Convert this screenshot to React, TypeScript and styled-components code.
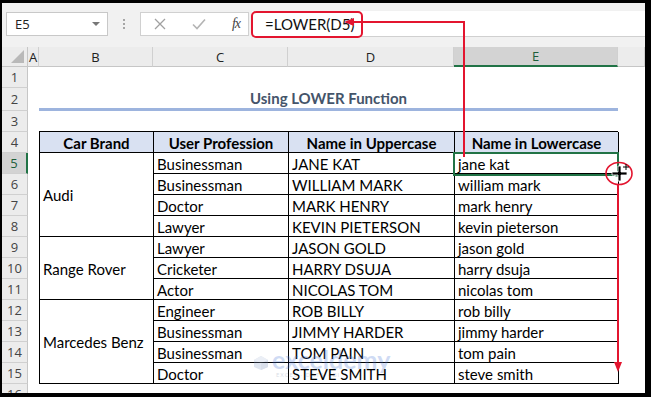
import styled, { createGlobalStyle } from 'styled-components';

const GlobalStyle = createGlobalStyle`
  html, body {
    margin: 0;
    padding: 0;
    background: #000;
  }
  * {
    box-sizing: border-box;
  }
`;

const uiFont = `'Open Sans', 'Noto Sans', sans-serif`;
const cellFont = `Lato, 'Noto Sans', sans-serif`;
const green = '#217346';
const red = '#e3152f';

const Frame = styled.div`
  position: relative;
  width: 651px;
  height: 397px;
  background: #000;
  padding: 3px 6px 4px 2px;
  overflow: hidden;
`;

const Window = styled.div`
  width: 100%;
  height: 100%;
  background: #fff;
  display: flex;
  flex-direction: column;
  overflow: hidden;
`;

const FormulaBar = styled.div`
  height: 44px;
  background: #f1f1f1;
  display: flex;
  align-items: flex-start;
  padding: 9px 0 0 4px;
  flex-shrink: 0;
`;

const NameBox = styled.div`
  width: 102px;
  height: 24px;
  background: #fff;
  border: 1px solid #c8c8c8;
  display: flex;
  align-items: center;
  justify-content: space-between;
  padding: 0 7px 0 8px;
  font-family: ${uiFont};
  font-size: 13px;
  color: #222;
`;

const DropArrow = styled.span`
  width: 0;
  height: 0;
  border-left: 4px solid transparent;
  border-right: 4px solid transparent;
  border-top: 4px solid #777;
`;

const Dots = styled.div`
  width: 32px;
  height: 24px;
  display: flex;
  flex-direction: column;
  align-items: center;
  justify-content: center;
  gap: 2px;
`;

const Dot = styled.span`
  width: 2px;
  height: 2px;
  background: #a6a6a6;
`;

const FxBox = styled.div`
  width: 109px;
  height: 24px;
  background: #fff;
  border: 1px solid #d0d0d0;
  display: flex;
  align-items: center;
  justify-content: space-between;
  padding: 0 8px 0 13px;
`;

const FxText = styled.span`
  font-family: 'Liberation Serif', serif;
  font-style: italic;
  font-size: 14px;
  color: #444;
  letter-spacing: -1px;
`;

const FormulaInput = styled.div`
  flex: 1;
  height: 26px;
  margin-left: 3px;
  margin-top: -1px;
  background: #fff;
  border-bottom: 1px solid #d0d0d0;
  display: flex;
  align-items: center;
  padding-left: 13px;
  font-family: ${cellFont};
  font-size: 15px;
  color: #111;
`;

const Sheet = styled.div`
  display: grid;
  grid-template-columns: 26px 11px 114px 135px 166px 164px 1fr;
  grid-template-rows: 20px 21px 23px 21px repeat(13, 21px);
`;

const Corner = styled.div`
  grid-column: 1;
  grid-row: 1;
  background: #ececec;
  border-right: 1px solid #c6c6c6;
  border-bottom: 1px solid #c6c6c6;
  position: relative;
  &::after {
    content: '';
    position: absolute;
    right: 3px;
    bottom: 3px;
    border-left: 13px solid transparent;
    border-bottom: 13px solid #b9b9b9;
  }
`;

const ColHeader = styled.div<{ $selected?: boolean }>`
  grid-row: 1;
  background: ${(p) => (p.$selected ? '#d3d3d3' : '#ececec')};
  border-right: 1px solid #d0d0d0;
  border-bottom: ${(p) => (p.$selected ? `2px solid ${green}` : '1px solid #c6c6c6')};
  display: flex;
  align-items: center;
  justify-content: center;
  font-family: ${uiFont};
  font-size: 13px;
  color: ${(p) => (p.$selected ? '#1d5e3a' : '#222')};
`;

const RowHeader = styled.div<{ $selected?: boolean }>`
  grid-column: 1;
  background: ${(p) => (p.$selected ? '#d3d3d3' : '#ececec')};
  border-right: ${(p) => (p.$selected ? `2px solid ${green}` : '1px solid #c6c6c6')};
  border-bottom: 1px solid #d0d0d0;
  display: flex;
  align-items: center;
  justify-content: center;
  font-family: ${uiFont};
  font-size: 13px;
  color: ${(p) => (p.$selected ? '#1d5e3a' : '#444')};
`;

const Title = styled.div`
  grid-column: 3 / 7;
  grid-row: 3;
  border-bottom: 3px solid #9db4de;
  display: flex;
  align-items: flex-end;
  justify-content: center;
  padding-bottom: 1px;
  font-family: ${cellFont};
  font-weight: 700;
  font-size: 15px;
  color: #44546a;
`;

const Table = styled.div`
  grid-column: 3 / 7;
  grid-row: 5 / 17;
  display: grid;
  grid-template-columns: 114px 135px 166px 164px;
  grid-template-rows: repeat(12, 21px);
  border-left: 1px solid #000;
  border-top: 1px solid #000;
  margin-top: -1px;
`;

const Cell = styled.div<{ $head?: boolean; $span?: number }>`
  grid-row: ${(p) => (p.$span ? `span ${p.$span}` : 'auto')};
  border-right: 1px solid #000;
  border-bottom: 1px solid #000;
  background: ${(p) => (p.$head ? '#d9e1f2' : '#fff')};
  display: flex;
  align-items: center;
  justify-content: ${(p) => (p.$head ? 'center' : 'flex-start')};
  padding-left: ${(p) => (p.$head ? '0' : '3px')};
  padding-top: 1px;
  font-family: ${cellFont};
  font-weight: ${(p) => (p.$head ? 700 : 400)};
  font-size: 15px;
  color: #000;
  white-space: nowrap;
`;

const Overlay = styled.svg`
  position: absolute;
  left: 0;
  top: 0;
  pointer-events: none;
`;

const Watermark = styled.div`
  position: absolute;
  left: 253px;
  top: 347px;
  display: flex;
  align-items: center;
  gap: 3px;
  opacity: 0.26;
  pointer-events: none;
`;

const WatermarkName = styled.div`
  display: flex;
  flex-direction: column;
  line-height: 1;
`;

const WatermarkTitle = styled.span`
  font-family: ${cellFont};
  font-weight: 700;
  font-size: 25px;
  color: #4a78d8;
`;

const WatermarkSub = styled.span`
  font-family: ${uiFont};
  font-size: 6px;
  letter-spacing: 1px;
  color: #6b7a99;
  padding-left: 4px;
`;

const groups = [
  {
    brand: 'Audi',
    rows: [
      ['Businessman', 'JANE KAT', 'jane kat'],
      ['Businessman', 'WILLIAM MARK', 'william mark'],
      ['Doctor', 'MARK HENRY', 'mark henry'],
      ['Lawyer', 'KEVIN PIETERSON', 'kevin pieterson'],
    ],
  },
  {
    brand: 'Range Rover',
    rows: [
      ['Lawyer', 'JASON GOLD', 'jason gold'],
      ['Cricketer', 'HARRY DSUJA', 'harry dsuja'],
      ['Actor', 'NICOLAS TOM', 'nicolas tom'],
    ],
  },
  {
    brand: 'Marcedes Benz',
    rows: [
      ['Engineer', 'ROB BILLY', 'rob billy'],
      ['Businessman', 'JIMMY HARDER', 'jimmy harder'],
      ['Businessman', 'TOM PAIN', 'tom pain'],
      ['Doctor', 'STEVE SMITH', 'steve smith'],
    ],
  },
];

// the last header is column F, scrolled so its letter is out of view
const columns = ['A', 'B', 'C', 'D', 'E', ''];
const rowNumbers = Array.from({ length: 16 }, (_, i) => i + 1);

export default function App() {
  return (
    <>
      <GlobalStyle />
      <Frame>
        <Window>
          <FormulaBar>
            <NameBox>
              E5
              <DropArrow />
            </NameBox>
            <Dots>
              <Dot />
              <Dot />
              <Dot />
            </Dots>
            <FxBox>
              <svg width="12" height="12" viewBox="0 0 12 12">
                <path d="M1 1 L11 11 M11 1 L1 11" stroke="#a0a0a0" strokeWidth="1.3" fill="none" />
              </svg>
              <svg width="14" height="12" viewBox="0 0 14 12">
                <path d="M1 6.5 L5 10.5 L13 1.5" stroke="#b4b4b4" strokeWidth="1.6" fill="none" />
              </svg>
              <FxText>fx</FxText>
            </FxBox>
            <FormulaInput>=LOWER(D5)</FormulaInput>
          </FormulaBar>

          <Sheet>
            <Corner />
            {columns.map((c, i) => (
              <ColHeader key={i} $selected={c === 'E'}>
                {c}
              </ColHeader>
            ))}
            {rowNumbers.map((n) => (
              <RowHeader key={n} $selected={n === 5} style={{ gridRow: n + 1 }}>
                {n}
              </RowHeader>
            ))}
            <Title>Using LOWER Function</Title>
            <Table>
              <Cell $head>Car Brand</Cell>
              <Cell $head>User Profession</Cell>
              <Cell $head>Name in Uppercase</Cell>
              <Cell $head>Name in Lowercase</Cell>
              {groups.map((g) =>
                g.rows.map((r, i) => (
                  <>
                    {i === 0 && <Cell $span={g.rows.length}>{g.brand}</Cell>}
                    <Cell>{r[0]}</Cell>
                    <Cell>{r[1]}</Cell>
                    <Cell>{r[2]}</Cell>
                  </>
                ))
              )}
            </Table>
          </Sheet>
        </Window>

        <Watermark>
          <svg width="16" height="16" viewBox="0 0 16 16">
            <path d="M8 1 L15 5 L15 12 L8 15 L1 12 L1 5 Z" fill="#8aa0c8" />
            <path d="M8 1 L15 5 L8 8.5 L1 5 Z" fill="#b6c3dd" />
            <path d="M8 8.5 L15 5 L15 12 L8 15 Z" fill="#6f86b2" />
          </svg>
          <WatermarkName>
            <WatermarkTitle>exceldemy</WatermarkTitle>
            <WatermarkSub>EXCEL · DATA · BI</WatermarkSub>
          </WatermarkName>
        </Watermark>

        <Overlay width="651" height="397" viewBox="0 0 651 397">
          {/* selected cell E5 */}
          <rect x="454" y="153" width="164" height="22" fill="none" stroke={green} strokeWidth="2" />
          <rect x="615" y="172" width="5" height="5" fill={green} stroke="#fff" strokeWidth="1" />
          {/* formula highlight */}
          <rect x="252" y="12" width="110" height="25" rx="4" fill="none" stroke={red} strokeWidth="2" />
          <polyline points="464,157 464,22 352,22" fill="none" stroke={red} strokeWidth="2" />
          <path d="M344 22 L354 18 L354 26 Z" fill={red} />
          {/* fill handle drag */}
          <ellipse cx="619" cy="173.5" rx="13" ry="11" fill="none" stroke={red} strokeWidth="1.6" />
          <line x1="618" y1="185" x2="618" y2="364" stroke={red} strokeWidth="2" />
          <path d="M618 372 L614 362 L622 362 Z" fill={red} />
          {/* cursor */}
          <path
            d="M618 166 h3 v6 h6 v3 h-6 v6 h-3 v-6 h-6 v-3 h6 Z"
            fill="#000"
            stroke="#fff"
            strokeWidth="0.8"
          />
          <path d="M626 164 v6 M623 167 h6" stroke="#000" strokeWidth="1" />
        </Overlay>
      </Frame>
    </>
  );
}
